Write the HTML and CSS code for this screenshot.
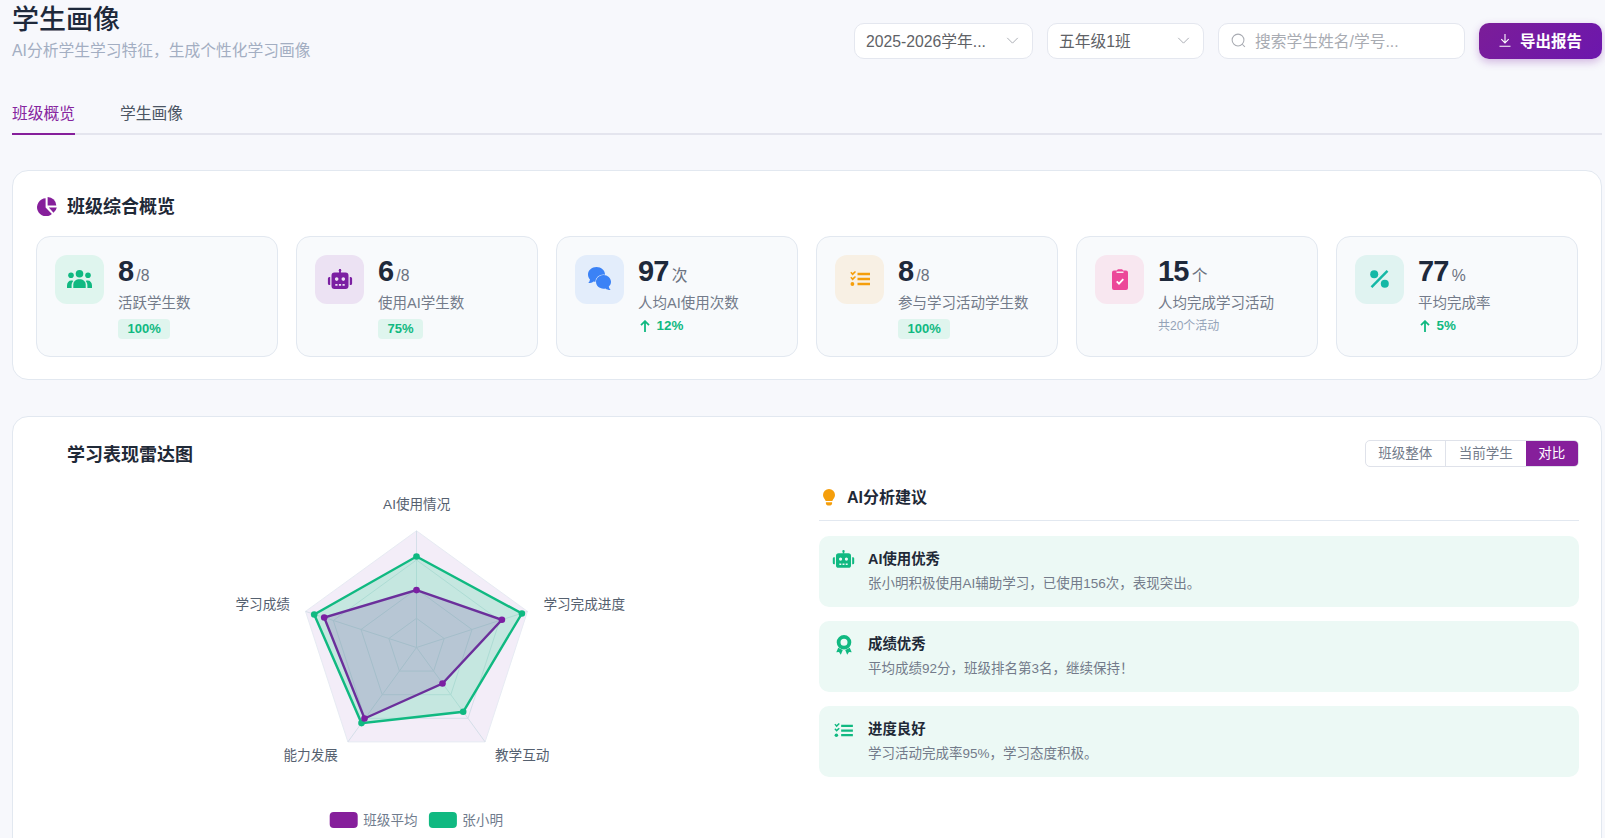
FILE: index.html
```html
<!DOCTYPE html>
<html lang="zh-CN">
<head>
<meta charset="utf-8">
<title>学生画像</title>
<link rel="stylesheet" href="styles.css">
</head>
<body>
<svg class="defs" aria-hidden="true">
  <symbol id="i-robot" viewBox="0 0 26 20">
    <rect x="12.100" y="0" width="1.800" height="4"/><circle cx="13" cy="1.200" r="1.200"/>
    <path fill-rule="evenodd" d="M7.500 3.500h11a3 3 0 0 1 3 3V17a3 3 0 0 1-3 3h-11a3 3 0 0 1-3-3V6.500a3 3 0 0 1 3-3zM9.700 8.300a1.800 1.800 0 1 0 0 3.600a1.800 1.800 0 0 0 0-3.600zM16.300 8.300a1.800 1.800 0 1 0 0 3.600a1.800 1.800 0 0 0 0-3.600zM8.300 15v1.700h2.200V15zM11.900 15v1.700h2.200V15zM15.500 15v1.700h2.200V15z"/>
    <path d="M3.200 8v8H2.400A1.500 1.500 0 0 1 .9 14.500v-5A1.500 1.500 0 0 1 2.400 8zM22.800 8h.8a1.500 1.500 0 0 1 1.500 1.500v5a1.500 1.500 0 0 1-1.500 1.500h-.8z"/>
  </symbol>
  <symbol id="i-tasks" viewBox="0 0 20 16">
    <path d="M7.500 1.800h12.500v2.400H7.500zM7.500 6.800h12.500v2.400H7.500zM7.500 11.800h12.500v2.400H7.500z"/>
    <path d="M.3 1.700l1-1 1.300 1.300L5 .0l1 1L2.600 4.400zM.3 6.700l1-1 1.300 1.300L5 5l1 1L2.600 9.400z"/>
    <circle cx="2.400" cy="13" r="1.900"/>
  </symbol>
</svg>
<main class="page">
  <header class="top">
    <div class="top-title">
      <h1>学生画像</h1>
      <p>AI分析学生学习特征，生成个性化学习画像</p>
    </div>
    <div class="controls">
      <div class="select select-year"><span>2025-2026学年...</span>
        <svg class="chev" viewBox="0 0 14 8"><path d="M1 1l6 6 6-6"/></svg></div>
      <div class="select select-class"><span>五年级1班</span>
        <svg class="chev" viewBox="0 0 14 8"><path d="M1 1l6 6 6-6"/></svg></div>
      <div class="search">
        <svg class="search-ico" viewBox="0 0 16 16"><circle cx="7.500" cy="7.500" r="6.300"/><path d="M12 12l2.800 2.800"/></svg>
        <span>搜索学生姓名/学号...</span>
      </div>
      <button class="export">
        <svg class="dl" viewBox="0 0 12 13"><path d="M6 0v8.500M2.300 5.200L6 8.900l3.700-3.700M0.500 12.300h11"/></svg>
        <span>导出报告</span>
      </button>
    </div>
  </header>

  <nav class="tabs">
    <a class="tab tab-on">班级概览</a>
    <a class="tab">学生画像</a>
  </nav>

  <section class="card overview">
    <h2 class="card-title">
      <svg class="pie" viewBox="0 0 20 19"><path d="M8.600 1.300v9.300l6.300 6.500A9 9 0 1 1 8.600 1.300z"/><path d="M10.600 0a8.700 8.700 0 0 1 8.700 8.600H10.600z"/><path d="M11.800 10.600h8a8.800 8.800 0 0 1-3.300 5.200z"/></svg>
      班级综合概览
    </h2>
    <div class="stats">
      <article class="stat">
        <div class="stat-ico ico-green">
          <svg class="s-users" viewBox="0 0 25 18"><circle cx="12.500" cy="3.800" r="3.800"/><circle cx="4" cy="5.200" r="2.800"/><circle cx="21" cy="5.200" r="2.800"/><path d="M6.300 18v-3.500c0-3.300 2.700-5.300 6.200-5.300s6.200 2 6.200 5.300V18z"/><path d="M0 18v-2.500c0-3 1.800-5 4.400-5 .8 0 1.300.1 1.900.5-1.200 1.300-1.700 2.700-1.700 4.300V18zM25 18v-2.500c0-3-1.800-5-4.400-5-.8 0-1.300.1-1.900.5 1.200 1.300 1.700 2.700 1.700 4.300V18z"/></svg>
        </div>
        <div class="stat-body">
          <div class="num"><b>8</b><span>/8</span></div>
          <div class="lbl">活跃学生数</div>
          <div class="badge">100%</div>
        </div>
      </article>
      <article class="stat">
        <div class="stat-ico ico-purple"><svg class="s-robot"><use href="#i-robot"/></svg></div>
        <div class="stat-body">
          <div class="num"><b>6</b><span>/8</span></div>
          <div class="lbl">使用AI学生数</div>
          <div class="badge">75%</div>
        </div>
      </article>
      <article class="stat">
        <div class="stat-ico ico-blue">
          <svg class="s-chat" viewBox="0 0 23 24"><path d="M8.500 0C13.200 0 17 3.300 17 7.500S13.200 15 8.500 15c-1.100 0-2.100-.2-3-.5C4.300 15.500 2.500 16 .3 16c.9-.9 1.500-2 1.700-3.400C.8 11.300 0 9.500 0 7.500 0 3.300 3.800 0 8.500 0z"/><path class="chat-b" d="M15.500 8c4.100 0 7.500 3 7.500 6.800 0 1.900-.8 3.600-2.200 4.800.2 1.400.9 2.600 1.900 3.400-2.100.1-4-.5-5.300-1.500-.6.1-1.200.2-1.900.2-4.100 0-7.500-3-7.500-6.900C8 11 11.400 8 15.500 8z"/></svg>
        </div>
        <div class="stat-body">
          <div class="num"><b>97</b><span>次</span></div>
          <div class="lbl">人均AI使用次数</div>
          <div class="trend"><svg class="up" viewBox="0 0 10 12"><path d="M5 12V1.500M1 5.200L5 1.200l4 4"/></svg>12%</div>
        </div>
      </article>
      <article class="stat">
        <div class="stat-ico ico-orange"><svg class="s-tasks"><use href="#i-tasks"/></svg></div>
        <div class="stat-body">
          <div class="num"><b>8</b><span>/8</span></div>
          <div class="lbl">参与学习活动学生数</div>
          <div class="badge">100%</div>
        </div>
      </article>
      <article class="stat">
        <div class="stat-ico ico-pink">
          <svg class="s-clip" viewBox="0 0 16 21"><path fill-rule="evenodd" d="M2 1.500h2.800A1.800 1.800 0 0 1 6.200 0.300h3.600a1.800 1.800 0 0 1 1.400 1.200H14a2 2 0 0 1 2 2V19a2 2 0 0 1-2 2H2a2 2 0 0 1-2-2V3.500a2 2 0 0 1 2-2zM4.500 2.600v1.300h7V2.600z"/><path class="clip-chk" d="M4.700 12.300l2.300 2.300 4.300-4.400"/></svg>
        </div>
        <div class="stat-body">
          <div class="num"><b>15</b><span>个</span></div>
          <div class="lbl">人均完成学习活动</div>
          <div class="note">共20个活动</div>
        </div>
      </article>
      <article class="stat">
        <div class="stat-ico ico-teal">
          <svg class="s-pct" viewBox="0 0 19 18"><circle cx="4.200" cy="4.200" r="4"/><circle cx="14.800" cy="13.800" r="4"/><path class="pct-slash" d="M1.500 17.200L17.500 .8"/></svg>
        </div>
        <div class="stat-body">
          <div class="num"><b>77</b><span>%</span></div>
          <div class="lbl">平均完成率</div>
          <div class="trend"><svg class="up" viewBox="0 0 10 12"><path d="M5 12V1.500M1 5.200L5 1.200l4 4"/></svg>5%</div>
        </div>
      </article>
    </div>
  </section>

  <section class="card radar">
    <div class="radar-head">
      <h2 class="card-title title-indent">学习表现雷达图</h2>
      <div class="seg">
        <span class="seg-btn">班级整体</span>
        <span class="seg-btn">当前学生</span>
        <span class="seg-btn seg-on">对比</span>
      </div>
    </div>
    <div class="radar-grid">
      <div class="chart-col">
        <svg class="chart" viewBox="0 0 440 360">
          <g transform="translate(3.200 .8)">
            <polygon class="r-bg" points="216.300,50 327.300,130.600 284.900,261.100 147.700,261.100 105.300,130.600"/>
            <g class="r-grid">
              <polygon points="216.300,137.500 244,157.700 233.400,190.300 199.200,190.300 188.600,157.700"/>
              <polygon points="216.300,108.300 271.800,148.700 250.600,213.900 182,213.900 160.800,148.700"/>
              <polygon points="216.300,79.200 299.500,139.700 267.800,237.500 164.800,237.500 133.100,139.700"/>
              <path d="M216.300 166.700V50M216.300 166.700L327.300 130.600M216.300 166.700L284.900 261.100M216.300 166.700L147.700 261.100M216.300 166.700L105.300 130.600"/>
            </g>
            <polygon class="r-green" points="216.300,75.700 321.700,132.700 263,231 161.300,242.300 114,133.700"/>
            <polygon class="r-purple" points="216.300,109.300 301.700,139 242.300,202.700 164.300,237.700 124,136.700"/>
            <g class="dot-green">
              <circle cx="216.300" cy="75.700" r="3.300"/><circle cx="321.700" cy="132.700" r="3.300"/><circle cx="263" cy="231" r="3.300"/><circle cx="161.300" cy="242.300" r="3.300"/><circle cx="114" cy="133.700" r="3.300"/>
            </g>
            <g class="dot-purple">
              <circle cx="216.300" cy="109.300" r="3.300"/><circle cx="301.700" cy="139" r="3.300"/><circle cx="242.300" cy="202.700" r="3.300"/><circle cx="164.300" cy="237.700" r="3.300"/><circle cx="124" cy="136.700" r="3.300"/>
            </g>
            <g class="r-lbl">
              <text x="216.500" y="28.700">AI使用情况</text>
              <text x="384" y="128.200">学习完成进度</text>
              <text x="322" y="279">教学互动</text>
              <text x="110.500" y="279">能力发展</text>
              <text x="62.500" y="128.200">学习成绩</text>
            </g>
            <rect class="lg-p" x="129.500" y="331.200" width="28" height="16" rx="4"/>
            <text class="lg-t" x="163" y="344.200">班级平均</text>
            <rect class="lg-g" x="228.700" y="331.200" width="28" height="16" rx="4"/>
            <text class="lg-t" x="262" y="344.200">张小明</text>
          </g>
        </svg>
      </div>
      <div class="advice">
        <h3 class="advice-title">
          <svg class="bulb" viewBox="0 0 14 17"><path d="M7 0a6 6 0 0 1 6 6c0 2.600-1.900 3.800-2.700 6H3.700C2.900 9.800 1 8.600 1 6a6 6 0 0 1 6-6z"/><path d="M3.900 13.300h6.200v1.100c0 1.200-1.200 2.200-3.100 2.200s-3.100-1-3.100-2.200z"/></svg>
          AI分析建议
        </h3>
        <div class="tip">
          <div class="tip-ico"><svg class="t-robot"><use href="#i-robot"/></svg></div>
          <div><div class="tip-t">AI使用优秀</div><div class="tip-d">张小明积极使用AI辅助学习，已使用156次，表现突出。</div></div>
        </div>
        <div class="tip">
          <div class="tip-ico"><svg class="t-award" viewBox="0 0 16 20"><path fill-rule="evenodd" d="M8 0a7.300 7.300 0 1 1 0 14.600A7.300 7.300 0 0 1 8 0zM8 3.800a3.500 3.500 0 1 0 0 7a3.500 3.500 0 0 0 0-7z"/><path d="M2.200 12.800L.3 17.300l2.700-.3L4.800 19.800l2-4.800zM13.800 12.800l1.900 4.500-2.700-.3-1.800 2.800-2-4.800z"/></svg></div>
          <div><div class="tip-t">成绩优秀</div><div class="tip-d">平均成绩92分，班级排名第3名，继续保持！</div></div>
        </div>
        <div class="tip">
          <div class="tip-ico"><svg class="t-tasks"><use href="#i-tasks"/></svg></div>
          <div><div class="tip-t">进度良好</div><div class="tip-d">学习活动完成率95%，学习态度积极。</div></div>
        </div>
      </div>
    </div>
  </section>
</main>
</body>
</html>
```
FILE: styles.css
```css
* { box-sizing: border-box; }
html, body { margin: 0; height: 100%; overflow: hidden; }
body {
  background: #f7f8fc;
  color: #1f2937;
  font-family: "Liberation Sans", "Noto Sans CJK SC", sans-serif;
}
.defs { display: none; }
.page { padding: 0 3px 0 12px; }

/* header */
.top { display: flex; justify-content: space-between; align-items: flex-start; }
.top-title h1 { margin: 2px 0 0; font-size: 27px; line-height: 36px; font-weight: 500; color: #1e293b; }
.top-title p { margin: 3px 0 0; font-size: 15.75px; line-height: 20px; color: #a3aec2; }
.controls { display: flex; gap: 14px; margin-top: 23px; }
.select, .search {
  height: 36px;
  display: flex;
  align-items: center;
  padding-bottom: 2px;
  background: #fff;
  border: 1px solid #e4e7ef;
  border-radius: 10px;
  font-size: 15.75px;
  color: #606266;
}
.select { justify-content: space-between; padding-left: 11px; padding-right: 13.500px; }
.select-year { width: 179px; }
.select-class { width: 157px; }
.chev { width: 13px; height: 7px; fill: none; stroke: #a8abb2; stroke-width: 1.100; }
.search { width: 247px; padding-left: 12px; color: #a8abb2; }
.search-ico { width: 15px; height: 15px; margin-right: 9px; fill: none; stroke: #a8abb2; stroke-width: 1.100; }
.export {
  width: 123px;
  height: 36px;
  border: 0;
  border-radius: 10px;
  padding: 0 0 2px;
  display: flex;
  align-items: center;
  justify-content: center;
  gap: 9px;
  color: #fff;
  font: inherit;
  font-size: 15.5px;
  font-weight: 700;
  background: linear-gradient(135deg, #7b1d98, #6c17ad);
  box-shadow: 0 3px 8px rgba(123, 31, 162, .3);
}
.dl { width: 12px; height: 13px; fill: none; stroke: #fff; stroke-width: 1.100; }

/* tabs */
.tabs { display: flex; gap: 45px; margin-top: 43px; border-bottom: 2px solid #e4e5ee; height: 31px; }
.tab { font-size: 15.75px; line-height: 20px; height: 31px; color: #4b5563; }
.tab-on { color: #86259f; border-bottom: 2px solid #861f9b; }

/* cards */
.card { background: #fff; border: 1px solid #e2e8f0; border-radius: 16px; }
.overview { margin-top: 34.500px; height: 210px; padding: 25px 23px 0 23px; }
.card-title { display: flex; align-items: center; gap: 10px; margin: 0; font-size: 18px; line-height: 22px; font-weight: 700; color: #1f2937; }
.overview .card-title { padding-left: 1px; }
.pie { width: 20px; height: 19px; fill: #861f9b; }
.stats { display: grid; grid-template-columns: repeat(6, 1fr); gap: 18px; margin-top: 18px; }
.stat {
  display: flex;
  gap: 14px;
  height: 121px;
  padding: 18px;
  background: #f8fafc;
  border: 1px solid #e2e8f0;
  border-radius: 14px;
}
.stat-ico { width: 49px; height: 49px; flex: none; border-radius: 12px; display: flex; align-items: center; justify-content: center; }
.ico-green { background: #dff5ee; color: #10b981; }
.ico-purple { background: #ece2f3; color: #7b1fa2; }
.ico-blue { background: #e3edfb; color: #3b82f6; }
.ico-orange { background: #f8f0e4; color: #f59e0b; }
.ico-pink { background: #f8e7f0; color: #ec4899; }
.ico-teal { background: #e0f3f1; color: #14b8a6; }
.stat-ico svg { fill: currentColor; }
.s-users { width: 25px; height: 18px; }
.s-robot { width: 26px; height: 20px; }
.s-chat { width: 23px; height: 24px; }
.chat-b { stroke: #e3edfb; stroke-width: 1.200; paint-order: stroke; }
.s-tasks { width: 20px; height: 16px; }
.s-clip { width: 16px; height: 21px; }
.clip-chk { fill: none; stroke: #fff; stroke-width: 1.800; }
.s-pct { width: 19px; height: 18px; }
.pct-slash { fill: none; stroke: currentColor; stroke-width: 2.400; }
.num { display: flex; align-items: baseline; gap: 3px; height: 30px; line-height: 32px; }
.num b { font-size: 29px; font-weight: 700; letter-spacing: -.8px; color: #1e293b; }
.num span { font-size: 15.75px; color: #6b7280; }
.lbl { margin-top: 8px; font-size: 14.500px; line-height: 20px; color: #737b8a; }
.badge { display: inline-block; margin-top: 6px; height: 20px; padding: 0 9.500px; border-radius: 4px; background: #dff5ee; color: #10b981; font-size: 13px; line-height: 20px; font-weight: 700; }
.trend { display: flex; align-items: center; gap: 7px; margin-top: 3px; padding-left: 1.500px; height: 20px; color: #10b981; font-size: 13.400px; font-weight: 700; }
.up { width: 10px; height: 12px; fill: none; stroke: #10b981; stroke-width: 1.800; }
.note { margin-top: 3px; font-size: 12px; line-height: 20px; color: #94a3b8; }

/* radar */
.radar { margin-top: 36.500px; padding: 23px 22px 20px 24px; min-height: 460px; }
.radar-head { display: flex; justify-content: space-between; align-items: center; height: 27px; }
.title-indent { padding: 2px 0 0 30px; }
.seg { display: flex; height: 27px; border: 1px solid #dfe2ea; border-radius: 5px; overflow: hidden; background: #fff; }
.seg-btn { padding: 0 12.750px; font-size: 13.500px; line-height: 25px; color: #737b8a; border-left: 1px solid #dfe2ea; }
.seg-btn:first-child { border-left: 0; }
.seg-on { background: #861f9b; color: #fff; border-left: 0; }
.radar-grid { display: grid; grid-template-columns: 1fr 1fr; gap: 22px; margin-top: 13px; }
.chart-col { display: flex; justify-content: center; }
.chart { width: 440px; height: 360px; flex: none; }
.r-bg { fill: #f3edf8; stroke: #e7ebf3; stroke-width: 1; }
.r-grid { fill: none; stroke: #d5dfe9; stroke-width: 1; }
.r-green { fill: rgba(16, 210, 130, .2); stroke: #10b981; stroke-width: 2.400; }
.r-purple { fill: rgba(130, 72, 165, .2); stroke: #6b2f9b; stroke-width: 2.400; }
.dot-green { fill: #10b981; }
.dot-purple { fill: #7b1fa2; }
.r-lbl text { font-size: 13.600px; fill: #55606f; text-anchor: middle; }
.lg-p { fill: #861f9b; }
.lg-g { fill: #10b981; }
.lg-t { font-size: 13.600px; fill: #707c8e; }

/* advice */
.advice-title { display: flex; align-items: center; gap: 11px; margin: 4px 0 15px; height: 37px; padding: 2px 0 11px 3px; border-bottom: 1px solid #e2e8f0; font-size: 16px; line-height: 24px; font-weight: 700; color: #1f2937; }
.bulb { width: 14px; height: 17px; fill: #f59e0b; }
.tip { display: flex; height: 71px; margin-bottom: 14px; padding: 13px 13px 12px; background: #ecf9f5; border-radius: 10px; }
.tip-ico { width: 23px; margin-right: 13px; flex: none; display: flex; justify-content: center; padding-top: 1px; color: #10b981; }
.tip-ico svg { fill: currentColor; }
.t-robot { width: 23px; height: 18px; }
.t-award { width: 16px; height: 20px; }
.t-tasks { width: 19px; height: 15px; margin-top: 3px; }
.tip-t { font-size: 14.400px; line-height: 21px; font-weight: 700; color: #1f2937; }
.tip-d { margin-top: 3px; font-size: 13.500px; line-height: 21px; color: #737b8a; }
```
